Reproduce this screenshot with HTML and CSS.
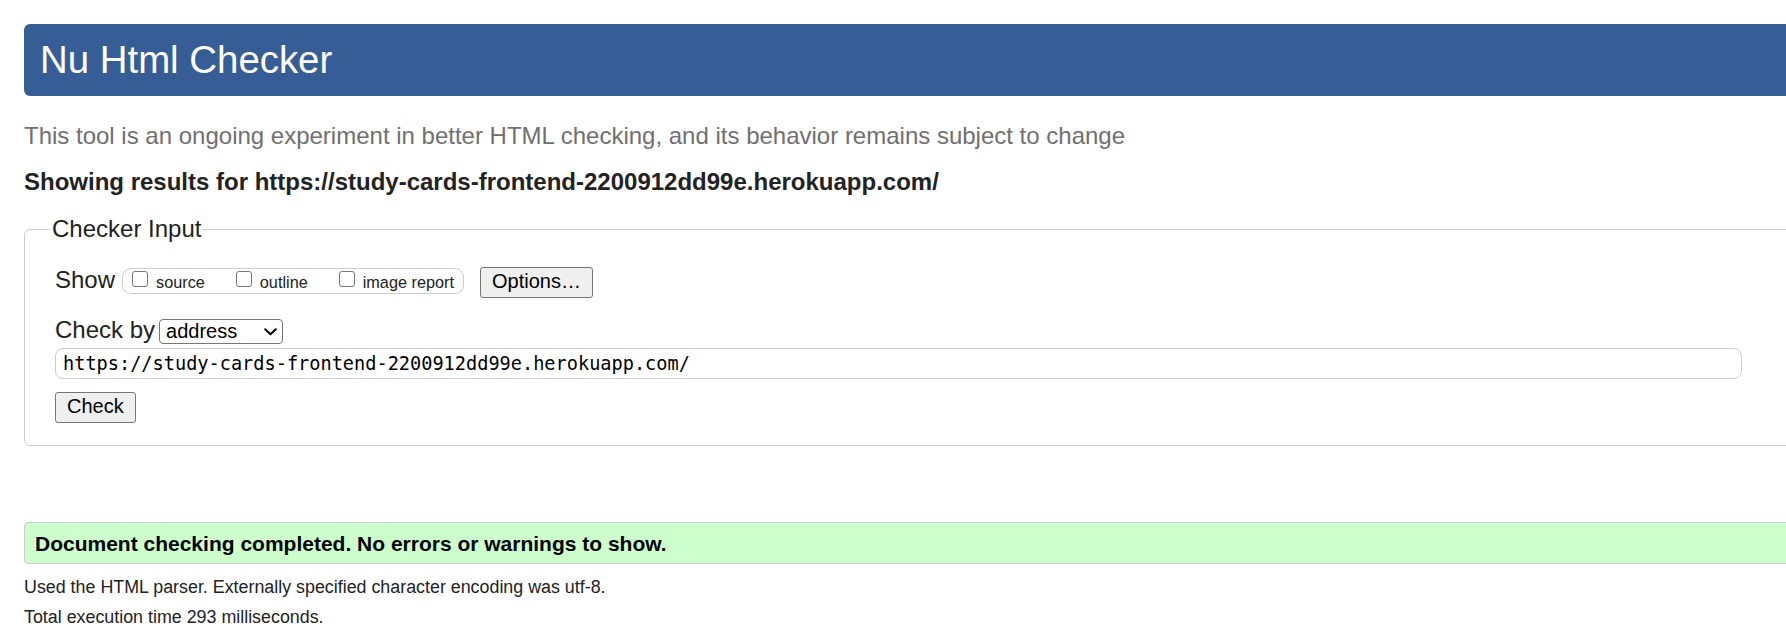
FILE: index.html
```html
<!DOCTYPE html>
<html lang="en">
<head>
<meta charset="utf-8">
<title>Nu Html Checker</title>
<link rel="stylesheet" href="styles.css">
</head>
<body>
<div class="page">
  <h1 class="title">Nu Html Checker</h1>
  <p class="tagline">This tool is an ongoing experiment in better HTML checking, and its behavior remains subject to change</p>
  <p class="showing">Showing results for https://study-cards-frontend-2200912dd99e.herokuapp.com/</p>
  <form class="checker">
    <fieldset class="checker-input">
      <legend class="legend">Checker Input</legend>
      <div class="row row-show">
        <span class="label">Show</span>
        <span class="opts">
          <label class="opt"><input type="checkbox" class="cb"><span class="opt-text">source</span></label>
          <label class="opt"><input type="checkbox" class="cb"><span class="opt-text">outline</span></label>
          <label class="opt"><input type="checkbox" class="cb"><span class="opt-text">image report</span></label>
        </span>
        <button type="button" class="btn btn-options">Options…</button>
      </div>
      <div class="row row-by">
        <label class="label" for="docselect">Check by</label>
        <span class="select-wrap">
          <select id="docselect" class="select"><option>address</option><option>file upload</option><option>text input</option></select>
          <svg class="chevron" width="13" height="8" viewBox="0 0 13 8" aria-hidden="true"><path d="M1.2 1.2 L6.5 6.3 L11.8 1.2" fill="none" stroke="#000" stroke-width="2" stroke-linecap="round" stroke-linejoin="round"/></svg>
        </span>
      </div>
      <input class="url" type="url" value="https://study-cards-frontend-2200912dd99e.herokuapp.com/">
      <button type="submit" class="btn btn-check">Check</button>
    </fieldset>
  </form>
  <div class="success">Document checking completed. No errors or warnings to show.</div>
  <p class="details details-first">Used the HTML parser. Externally specified character encoding was utf-8.</p>
  <p class="details">Total execution time 293 milliseconds.</p>
</div>
</body>
</html>
```
FILE: styles.css
```css
html {
  overflow-x: hidden;
}
body {
  margin: 0;
  padding: 24px 0 0 24px;
  font-family: "Liberation Sans", Arial, sans-serif;
  color: #222;
  background: #fff;
  overflow-x: hidden;
}
.page {
  width: 1800px;
}
.title {
  margin: 0;
  background: #365d95;
  color: #fff;
  font-size: 38.4px;
  font-weight: normal;
  line-height: 44px;
  padding: 14px 16px;
  border-radius: 6px;
}
.tagline {
  margin: 26px 0 0;
  font-size: 24px;
  line-height: 28px;
  color: #707070;
}
.showing {
  margin: 18px 0 0;
  font-size: 24px;
  line-height: 28px;
  font-weight: bold;
  color: #222;
}
.checker {
  margin: 19px 0 0;
}
.checker-input {
  margin: 0;
  min-width: 0;
  border: 1px solid #ccc;
  border-radius: 6px;
  padding: 0 30px 22px;
}
.legend {
  font-size: 24px;
  line-height: 28px;
  padding: 0 2px;
  margin-left: -5px;
}
.row {
  display: flex;
  align-items: flex-start;
}
.row-show {
  margin-top: 23px;
}
.row-by {
  margin-top: 18px;
}
.label {
  font-size: 24px;
  line-height: 28px;
}
.opts {
  display: flex;
  height: 24px;
  margin: 2px 0 0 7px;
  padding: 0 9px;
  border: 1px solid #ccc;
  border-radius: 9px;
}
.opt {
  display: flex;
  align-items: flex-start;
  font-size: 16.25px;
  line-height: 19px;
}
.opt + .opt {
  margin-left: 31px;
}
.cb {
  appearance: none;
  -webkit-appearance: none;
  box-sizing: border-box;
  width: 16px;
  height: 16px;
  margin: 2px 8px 0 0;
  border: 1px solid #767676;
  border-radius: 3px;
  background: #fff;
}
.opt-text {
  margin-top: 4px;
}
.btn {
  font-family: "Liberation Sans", Arial, sans-serif;
  font-size: 20px;
  line-height: 23px;
  color: #000;
  background: #efefef;
  border: 1px solid #767676;
  border-radius: 3px;
  padding: 2px 11px 4px;
  margin: 0;
}
.btn-options {
  margin: 1px 0 0 16px;
}
.btn-check {
  display: block;
  margin-top: 13px;
}
.select-wrap {
  position: relative;
  display: block;
  margin: 3px 0 0 4px;
}
.select {
  appearance: none;
  -webkit-appearance: none;
  display: block;
  box-sizing: border-box;
  width: 124px;
  height: 25px;
  margin: 0;
  padding: 0 0 0 6px;
  font-family: "Liberation Sans", Arial, sans-serif;
  font-size: 20px;
  line-height: 23px;
  color: #000;
  background-color: #fff;
  border: 1px solid #767676;
  border-radius: 4px;
}
.chevron {
  position: absolute;
  right: 6px;
  top: 9px;
  pointer-events: none;
}
.url {
  display: block;
  box-sizing: border-box;
  width: 1687px;
  height: 31px;
  margin: 4px 0 0;
  padding: 0 7px;
  border: 1px solid #ccc;
  border-radius: 8px;
  font-family: "DejaVu Sans Mono", "Liberation Mono", monospace;
  font-size: 18.6px;
  color: #000;
  background: #fff;
}
.success {
  margin-top: 76px;
  border: 1px solid #ccc;
  border-radius: 4px;
  background: #ccffcc;
  padding: 9px 10px 7px;
  font-size: 21px;
  line-height: 24px;
  font-weight: bold;
  color: #000;
}
.details {
  margin: 10px 0 0;
  font-size: 17.85px;
  line-height: 20px;
  color: #222;
}
.details-first {
  margin-top: 13px;
}
```
